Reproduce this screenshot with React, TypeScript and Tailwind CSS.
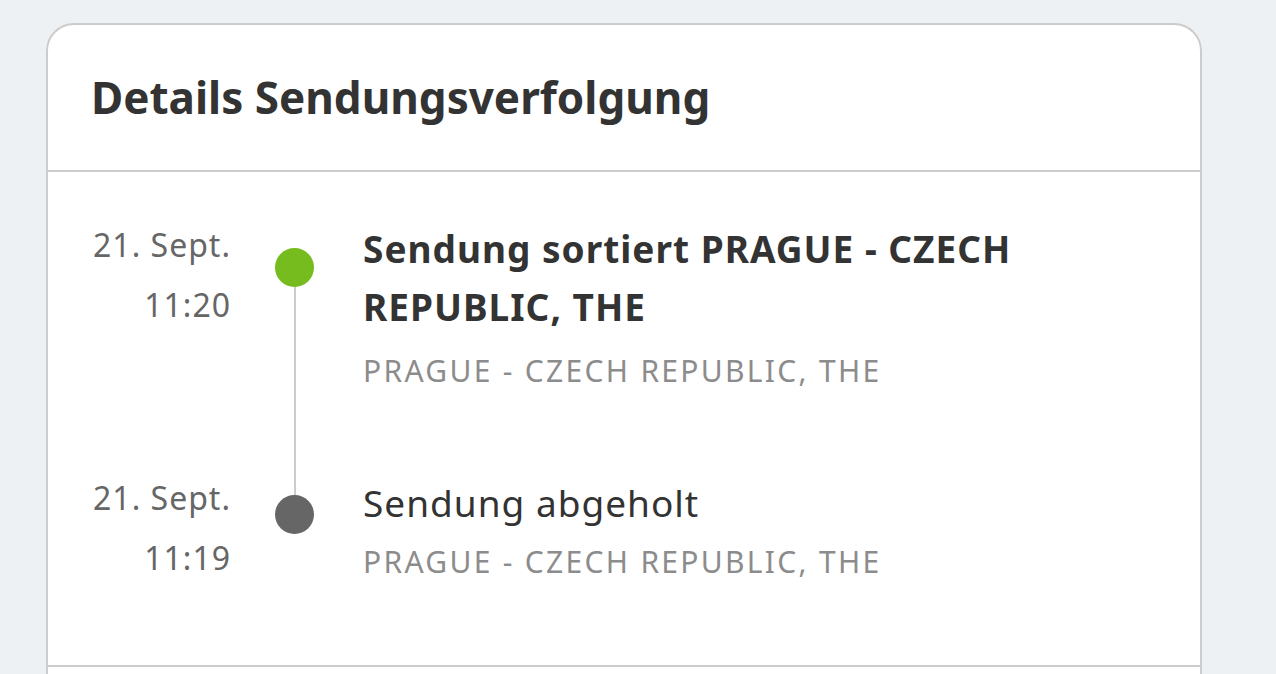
import React from "react";

const font = { fontFamily: '"Noto Sans", "Open Sans", sans-serif' };

export default function App() {
  return (
    <div className="min-h-screen bg-[#eef1f4] pt-[23px] pl-[46px]" style={font}>
      <div className="w-[1156px] rounded-t-[28px] border-2 border-[#cccccc] bg-white">
        <div className="h-[147px] border-b-2 border-[#cccccc] pl-[43px] pt-[48px]">
          <h1 className="text-[44px] font-bold leading-[48px] text-[#333333]">Details Sendungsverfolgung</h1>
        </div>
        <div className="pt-[43px] pb-[47px] border-b-2 border-[#cccccc]">
          {/* item 1 */}
          <div className="flex h-[253px]">
            <div className="w-[183px] text-right text-[32px] leading-[60px] tracking-[1px] text-[#666666]">
              <div>21. Sept.</div>
              <div>11:20</div>
            </div>
            <div className="ml-[44px] flex w-[39px] flex-col items-center">
              <div className="mt-[33px] h-[39px] w-[39px] shrink-0 rounded-full bg-[#77bc1f]" />
              <div className="w-[2px] flex-1 bg-[#cccccc]" />
            </div>
            <div className="ml-[49px] w-[720px]">
              <div className="mt-[5px] text-[37px] font-bold leading-[58px] tracking-[1px] text-[#333333]">
                Sendung sortiert PRAGUE - CZECH REPUBLIC, THE
              </div>
              <div className="mt-[15px] text-[30px] leading-[40px] tracking-[2.3px] text-[#8c8c8c]">
                PRAGUE - CZECH REPUBLIC, THE
              </div>
            </div>
          </div>
          {/* item 2 */}
          <div className="flex h-[150px]">
            <div className="w-[183px] text-right text-[32px] leading-[60px] tracking-[1px] text-[#666666]">
              <div>21. Sept.</div>
              <div>11:19</div>
            </div>
            <div className="ml-[44px] flex w-[39px] flex-col items-center">
              <div className="h-[27px] w-[2px] bg-[#cccccc]" />
              <div className="h-[39px] w-[39px] shrink-0 rounded-full bg-[#666666]" />
            </div>
            <div className="ml-[49px] w-[720px]">
              <div className="mt-[6px] text-[37px] leading-[58px] tracking-[1px] text-[#333333]">Sendung abgeholt</div>
              <div className="mt-[10px] text-[30px] leading-[40px] tracking-[2.3px] text-[#8c8c8c]">
                PRAGUE - CZECH REPUBLIC, THE
              </div>
            </div>
          </div>
        </div>
        <div className="h-[200px]" />
      </div>
    </div>
  );
}
